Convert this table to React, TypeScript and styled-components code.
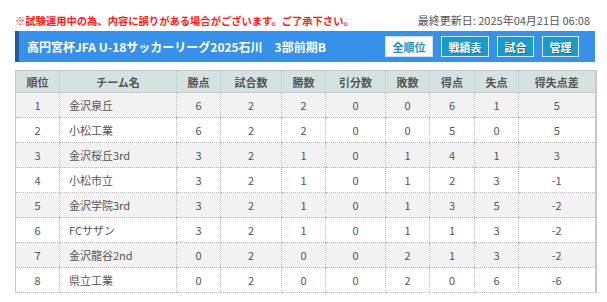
import React from "react";
import styled, { createGlobalStyle } from "styled-components";

const Global = createGlobalStyle`
  html, body { margin: 0; padding: 0; background: #fff; }
  body { font-family: "Noto Sans CJK JP", "Noto Sans", sans-serif; }
`;

const Page = styled.div`
  width: 580px;
  padding: 11px 12px 0 15px;
`;

const TopRow = styled.div`
  display: flex;
  justify-content: space-between;
  align-items: center;
  height: 18px;
  margin-bottom: 2px;
`;

const Notice = styled.span`
  color: #ff1a1a;
  font-size: 10.3px;
  font-weight: bold;
`;

const Updated = styled.span`
  color: #555;
  font-size: 11px;
  margin-right: 5px;
`;

const HeaderBar = styled.div`
  display: flex;
  align-items: center;
  justify-content: space-between;
  height: 31px;
  background: #3891e8;
  border-left: 4px solid #1b5b9e;
  padding: 0 16px 0 8px;
`;

const Title = styled.h1`
  margin: 0;
  color: #fff;
  font-size: 12px;
  font-weight: bold;
  white-space: pre;
`;

const Nav = styled.div`
  display: flex;
  gap: 8px;
`;

const NavButton = styled.span<{ $active?: boolean; $w: number }>`
  box-sizing: border-box;
  display: inline-flex;
  align-items: center;
  justify-content: center;
  height: 21px;
  width: ${(p) => p.$w}px;
  font-size: 11px;
  font-weight: bold;
  border: 1px solid ${(p) => (p.$active ? "#cfe3ec" : "#cfeaf5")};
  background: ${(p) => (p.$active ? "#fff" : "#1a9ccb")};
  color: ${(p) => (p.$active ? "#2a8db9" : "#fff")};
  text-shadow: ${(p) => (p.$active ? "none" : "1px 1px 1px rgba(0,0,0,0.35)")};
`;

const Table = styled.table`
  margin-top: 8px;
  width: 580px;
  border-collapse: collapse;
  table-layout: fixed;
  border-top: 1px solid #c8c8c8;
  border-left: 1px solid #c8c8c8;
  border-right: 2px solid #c8c8c8;
  border-bottom: 1px dotted #b8b8b8;
`;

const Th = styled.th`
  height: 21px;
  padding: 0;
  background: #d5e2e2;
  color: #555;
  font-size: 11px;
  font-weight: bold;
  text-align: center;
  border-left: 1px dotted #c0c0c0;
  border-bottom: 1px solid #c8c8c8;
`;

const Tr = styled.tr<{ $odd: boolean }>`
  background: ${(p) => (p.$odd ? "#f2f2f2" : "#fff")};
`;

const Td = styled.td<{ $left?: boolean }>`
  height: 24px;
  padding: ${(p) => (p.$left ? "0 0 0 9px" : "0")};
  color: #555;
  font-size: 11px;
  text-align: ${(p) => (p.$left ? "left" : "center")};
  border-left: 1px dotted #c0c0c0;
  border-bottom: 1px dotted #b8b8b8;
`;

const widths = [44, 117, 44, 61, 44, 60, 44, 45, 44, 77];
const heads = ["順位", "チーム名", "勝点", "試合数", "勝数", "引分数", "敗数", "得点", "失点", "得失点差"];

const rows: (string | number)[][] = [
  [1, "金沢泉丘", 6, 2, 2, 0, 0, 6, 1, 5],
  [2, "小松工業", 6, 2, 2, 0, 0, 5, 0, 5],
  [3, "金沢桜丘3rd", 3, 2, 1, 0, 1, 4, 1, 3],
  [4, "小松市立", 3, 2, 1, 0, 1, 2, 3, -1],
  [5, "金沢学院3rd", 3, 2, 1, 0, 1, 3, 5, -2],
  [6, "FCサザン", 3, 2, 1, 0, 1, 1, 3, -2],
  [7, "金沢龍谷2nd", 0, 2, 0, 0, 2, 1, 3, -2],
  [8, "県立工業", 0, 2, 0, 0, 2, 0, 6, -6],
];

const buttons = [
  { label: "全順位", w: 48, active: true },
  { label: "戦績表", w: 48 },
  { label: "試合", w: 37 },
  { label: "管理", w: 37 },
];

export default function App() {
  return (
    <>
      <Global />
      <Page>
        <TopRow>
          <Notice>※試験運用中の為、内容に誤りがある場合がございます。ご了承下さい。</Notice>
          <Updated>最終更新日: 2025年04月21日 06:08</Updated>
        </TopRow>
        <HeaderBar>
          <Title>{"高円宮杯JFA U-18サッカーリーグ2025石川　3部前期B"}</Title>
          <Nav>
            {buttons.map((b) => (
              <NavButton key={b.label} $active={b.active} $w={b.w}>
                {b.label}
              </NavButton>
            ))}
          </Nav>
        </HeaderBar>
        <Table>
          <colgroup>
            {widths.map((w, i) => (
              <col key={i} style={{ width: w }} />
            ))}
          </colgroup>
          <thead>
            <tr>
              {heads.map((h) => (
                <Th key={h}>{h}</Th>
              ))}
            </tr>
          </thead>
          <tbody>
            {rows.map((r, i) => (
              <Tr key={i} $odd={i % 2 === 0}>
                {r.map((c, j) => (
                  <Td key={j} $left={j === 1}>
                    {c}
                  </Td>
                ))}
              </Tr>
            ))}
          </tbody>
        </Table>
      </Page>
    </>
  );
}
